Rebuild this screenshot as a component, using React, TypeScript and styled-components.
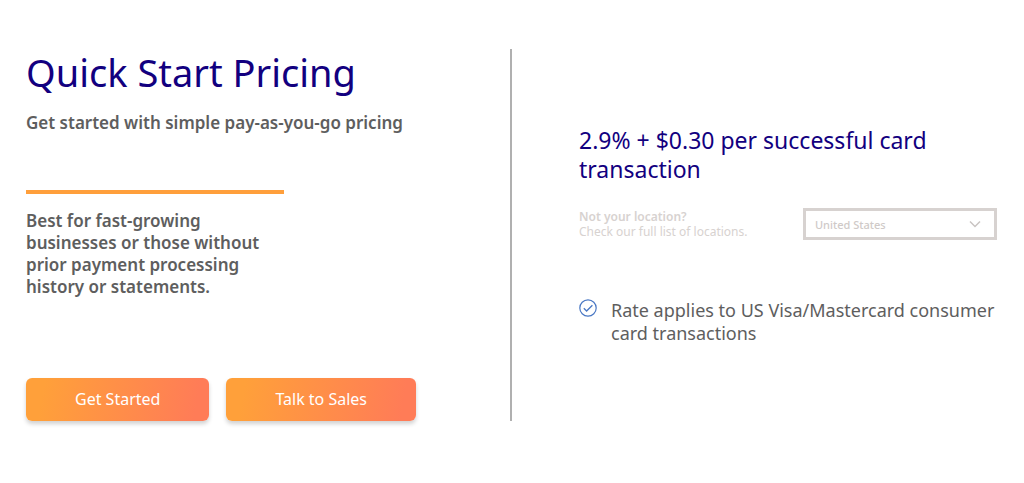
import React from "react";
import styled, { createGlobalStyle } from "styled-components";

const GlobalStyle = createGlobalStyle`
  *, *::before, *::after { box-sizing: border-box; }
  body {
    margin: 0;
    background: #fff;
    color: #5e5e5e;
    font-family: "Noto Sans", "Open Sans", sans-serif;
  }
  h1, h2, p, ul { margin: 0; padding: 0; }
`;

const Pricing = styled.main`
  display: grid;
  grid-template-columns: 1fr 1fr;
  padding: 49px 0;
`;

const Intro = styled.section`
  display: flex;
  flex-direction: column;
  align-items: flex-start;
  padding: 0 26px;
  border-right: 2px solid #b0b0b0;
`;

const Title = styled.h1`
  color: #12007f;
  font-size: 38px;
  font-weight: 400;
  line-height: 46px;
`;

const Lead = styled.p`
  margin-top: 17px;
  font-size: 17px;
  font-weight: 600;
  line-height: 22px;
`;

const Summary = styled.div`
  width: 258px;
  margin-top: 56px;
  padding-top: 16px;
  border-top: 4px solid #ff9f3b;
`;

const SummaryText = styled.p`
  width: 240px;
  font-size: 17px;
  font-weight: 600;
  line-height: 22px;
`;

const Actions = styled.div`
  display: flex;
  gap: 17px;
  margin-top: 80px;
`;

const ActionButton = styled.button`
  height: 43px;
  padding: 0 49px 2px;
  border: 0;
  border-radius: 6px;
  background: linear-gradient(100deg, #ffa03a 10%, #ff7c57 92%);
  box-shadow: 0 3px 4px rgba(0, 0, 0, 0.18);
  color: #fff;
  font-family: inherit;
  font-size: 16px;
  line-height: 22px;
  white-space: nowrap;
  cursor: pointer;
`;

const Rate = styled.section`
  padding: 77px 27px 0 67px;
`;

const RateTitle = styled.h2`
  color: #12007f;
  font-size: 23px;
  font-weight: 400;
  line-height: 29px;
`;

const Location = styled.div`
  display: flex;
  align-items: center;
  justify-content: space-between;
  margin-top: 24px;
  color: #d7d2d0;
  font-size: 12px;
  line-height: 15px;
`;

const LocationLabel = styled.label`
  display: block;
  font-weight: 600;
`;

const SelectBox = styled.div`
  display: grid;
  grid-template-columns: 1fr 38px;
  align-items: center;
  width: 194px;
  height: 32px;
  border: 3px solid #d7d2d0;
`;

const Select = styled.select`
  grid-area: 1 / 1 / 2 / 3;
  width: 100%;
  height: 26px;
  padding: 0 38px 0 9px;
  border: 0;
  appearance: none;
  background: transparent;
  color: #cfcac8;
  font-family: inherit;
  font-size: 11px;
  font-weight: 500;
`;

const Chevron = styled.svg`
  grid-area: 1 / 2 / 2 / 3;
  justify-self: center;
  pointer-events: none;
`;

const Notes = styled.ul`
  margin-top: 59px;
  list-style: none;
`;

const Note = styled.li`
  display: flex;
  align-items: flex-start;
  gap: 14px;
  font-size: 18px;
  line-height: 23px;
`;

const NoteIcon = styled.svg`
  flex: none;
`;

export default function App() {
  return (
    <>
      <GlobalStyle />
      <Pricing>
        <Intro>
          <Title>Quick Start Pricing</Title>
          <Lead>Get started with simple pay-as-you-go pricing</Lead>
          <Summary>
            <SummaryText>
              Best for fast-growing businesses or those without prior payment
              processing history or statements.
            </SummaryText>
          </Summary>
          <Actions>
            <ActionButton type="button">Get Started</ActionButton>
            <ActionButton type="button">Talk to Sales</ActionButton>
          </Actions>
        </Intro>
        <Rate>
          <RateTitle>2.9% + $0.30 per successful card transaction</RateTitle>
          <Location>
            <div>
              <LocationLabel htmlFor="location">Not your location?</LocationLabel>
              <p>Check our full list of locations.</p>
            </div>
            <SelectBox>
              <Select id="location" defaultValue="us">
                <option value="us">United States</option>
              </Select>
              <Chevron width="12" height="8" viewBox="0 0 12 8" fill="none" stroke="#c9c4c2" strokeWidth="1.5" aria-hidden="true">
                <path d="M1 1.5 6 6.5 11 1.5" />
              </Chevron>
            </SelectBox>
          </Location>
          <Notes>
            <Note>
              <NoteIcon width="18" height="18" viewBox="0 0 18 18" fill="none" stroke="#4a78c4" aria-hidden="true">
                <circle cx="9" cy="9" r="8.2" strokeWidth="1.2" />
                <path d="M4.8 9.3 7.6 12 13.4 6.2" strokeWidth="1.3" />
              </NoteIcon>
              <span>Rate applies to US Visa/Mastercard consumer card transactions</span>
            </Note>
          </Notes>
        </Rate>
      </Pricing>
    </>
  );
}
